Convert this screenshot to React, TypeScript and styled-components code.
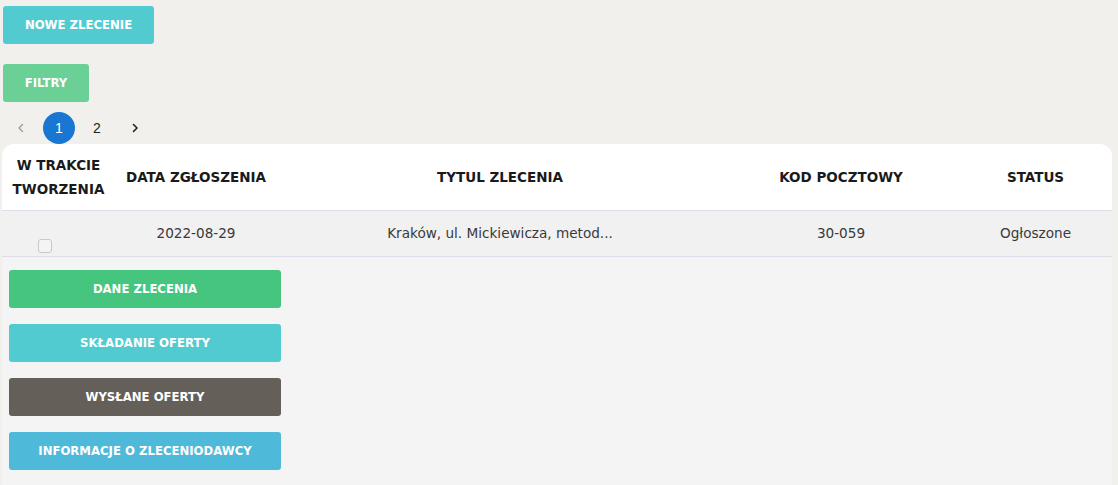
import React from "react";
import styled, { createGlobalStyle } from "styled-components";

const Global = createGlobalStyle`
  html, body { margin: 0; padding: 0; background: #f2f0ed; }
  body { font-family: "DejaVu Sans", "Open Sans", sans-serif; color: #222; }
  * { box-sizing: border-box; }
`;

const Page = styled.div`
  padding: 6px 6px 0 2px;
  display: flex;
  flex-direction: column;
  align-items: flex-start;
`;

const ActionButton = styled.button<{ $bg: string; $w: number }>`
  width: ${(p) => p.$w}px;
  height: 38px;
  padding: 0;
  margin-left: 1px;
  border: none;
  border-radius: 3px;
  background: ${(p) => p.$bg};
  color: #fff;
  font-family: "DejaVu Sans", sans-serif;
  font-weight: 700;
  font-size: 11.7px;
  cursor: pointer;
`;

const Spacer = styled.div<{ $h: number }>`
  height: ${(p) => p.$h}px;
`;

const Pager = styled.div`
  display: flex;
  align-items: center;
  height: 32px;
  margin-top: 10px;
`;

const PageArrow = styled.span<{ $dim?: boolean }>`
  width: 38px;
  display: flex;
  justify-content: center;
  color: ${(p) => (p.$dim ? "#9a9a9a" : "#222")};
`;

const PageNum = styled.span<{ $active?: boolean }>`
  width: 32px;
  height: 32px;
  margin: 0 3px;
  border-radius: 50%;
  display: flex;
  align-items: center;
  justify-content: center;
  font-family: "Liberation Sans", Arial, sans-serif;
  font-size: 14px;
  background: ${(p) => (p.$active ? "#1976d2" : "transparent")};
  color: ${(p) => (p.$active ? "#fff" : "#222")};
`;

const Table = styled.div`
  width: 1110px;
`;

const cols = "113px 162px 446px 236px 1fr";

const HeadRow = styled.div`
  display: grid;
  grid-template-columns: ${cols};
  height: 67px;
  background: #fff;
  border-radius: 12px 12px 0 0;
  border-bottom: 1px solid #dcdde6;
  align-items: center;
`;

const HeadCell = styled.div`
  text-align: center;
  font-family: "DejaVu Sans", sans-serif;
  font-weight: 700;
  font-size: 13.5px;
  line-height: 24px;
  color: #1a1a1a;
`;

const BodyRow = styled.div`
  display: grid;
  grid-template-columns: ${cols};
  height: 46px;
  background: #f1f1f1;
  border-bottom: 1px solid #dcdde6;
  align-items: center;
`;

const BodyCell = styled.div`
  text-align: center;
  font-family: "DejaVu Sans", sans-serif;
  font-size: 13.6px;
  color: #3a3a3a;
  white-space: nowrap;
  overflow: hidden;
  padding-bottom: 1px;
`;

const CheckCell = styled.div`
  display: flex;
  padding-left: 36px;
  padding-top: 24px;
`;

const Check = styled.span`
  width: 14px;
  height: 14px;
  border: 1px solid #c9c9c9;
  border-radius: 3px;
  background: #f4f4f4;
`;

const Details = styled.div`
  background: #f4f4f4;
  min-height: 229px;
  padding: 13px 0 0 6px;
  display: flex;
  flex-direction: column;
  gap: 16px;
`;

const Chevron = ({ dir }: { dir: "l" | "r" }) => (
  <svg width="12" height="12" viewBox="0 0 24 24" fill="none" stroke="currentColor" strokeWidth={dir === "l" ? 2.5 : 3.2} strokeLinecap="round" strokeLinejoin="round">
    {dir === "l" ? <path d="M15 5l-7 7 7 7" /> : <path d="M9 5l7 7-7 7" />}
  </svg>
);

export default function App() {
  return (
    <>
      <Global />
      <Page>
        <ActionButton $bg="#52cbd0" $w={151}>NOWE ZLECENIE</ActionButton>
        <Spacer $h={20} />
        <ActionButton $bg="#6ad095" $w={86}>FILTRY</ActionButton>
        <Pager>
          <PageArrow $dim>
            <Chevron dir="l" />
          </PageArrow>
          <PageNum $active>1</PageNum>
          <PageNum>2</PageNum>
          <PageArrow>
            <Chevron dir="r" />
          </PageArrow>
        </Pager>
        <Table>
          <HeadRow>
            <HeadCell>W TRAKCIE<br />TWORZENIA</HeadCell>
            <HeadCell>DATA ZGŁOSZENIA</HeadCell>
            <HeadCell>TYTUL ZLECENIA</HeadCell>
            <HeadCell>KOD POCZTOWY</HeadCell>
            <HeadCell>STATUS</HeadCell>
          </HeadRow>
          <BodyRow>
            <CheckCell>
              <Check />
            </CheckCell>
            <BodyCell>2022-08-29</BodyCell>
            <BodyCell>Kraków, ul. Mickiewicza, metod...</BodyCell>
            <BodyCell>30-059</BodyCell>
            <BodyCell>Ogłoszone</BodyCell>
          </BodyRow>
          <Details>
            <ActionButton $bg="#46c57e" $w={272}>DANE ZLECENIA</ActionButton>
            <ActionButton $bg="#52cbd0" $w={272}>SKŁADANIE OFERTY</ActionButton>
            <ActionButton $bg="#655f59" $w={272}>WYSŁANE OFERTY</ActionButton>
            <ActionButton $bg="#4fb9d9" $w={272}>INFORMACJE O ZLECENIODAWCY</ActionButton>
          </Details>
        </Table>
      </Page>
    </>
  );
}
